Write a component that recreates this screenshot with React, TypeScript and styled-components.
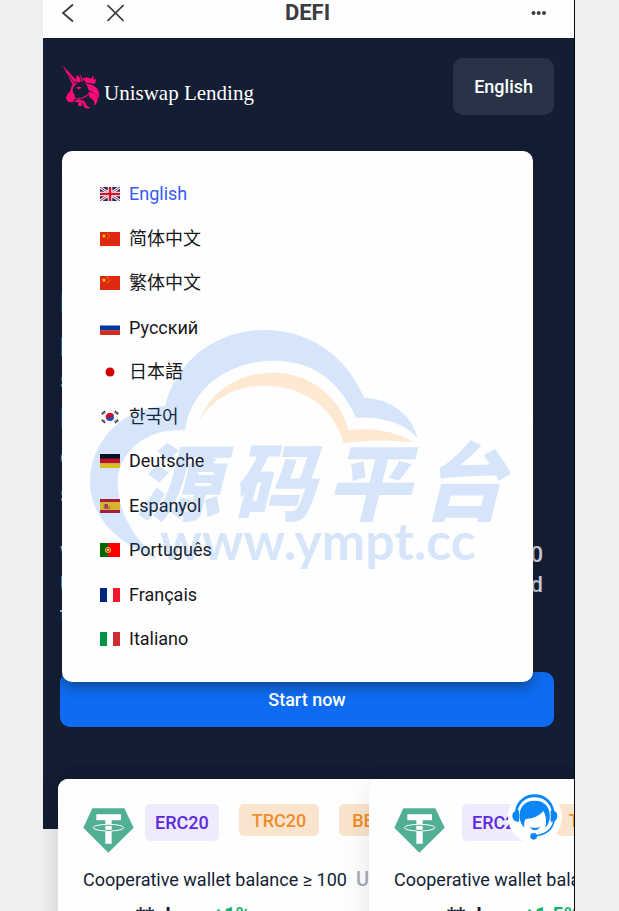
import React from "react";
import styled, { createGlobalStyle } from "styled-components";

const GlobalStyle = createGlobalStyle`
  * { box-sizing: border-box; }
  body {
    margin: 0;
    background: #efefef;
    font-family: Roboto, "Noto Sans CJK SC", "Noto Sans CJK KR", sans-serif;
    font-size: 18px;
    color: #131d33;
  }
  button { font: inherit; border: 0; padding: 0; background: none; cursor: pointer; }
  svg { display: block; flex: none; }
`;

const Frame = styled.div`
  position: relative;
  display: flex;
  flex-direction: column;
  height: 100vh;
  margin: 0 44px 0 43px;
  overflow: hidden;
  background: #f2f2f2;
  border-right: 1px solid #05070d;
`;

const TitleBar = styled.header`
  display: grid;
  grid-template-columns: 1fr auto 1fr;
  align-items: center;
  flex: none;
  height: 38px;
  padding: 0 20px 12px 18px;
  background: #fefefe;
  color: #3b3c3f;
`;

const NavButtons = styled.div`
  display: flex;
  gap: 33px;
`;

const IconButton = styled.button`
  display: flex;
  color: inherit;
`;

const MoreButton = styled(IconButton)`
  justify-self: end;
`;

const PageTitle = styled.h1`
  margin: 0;
  font-size: 22px;
  line-height: 26px;
  font-weight: 700;
`;

const Hero = styled.section`
  flex: none;
  padding: 20px 20px 102px 17px;
  background: #131d33;
`;

const BrandRow = styled.div`
  display: flex;
  align-items: center;
  justify-content: space-between;
  margin-bottom: 170px;
`;

const Brand = styled.a`
  display: flex;
  align-items: center;
  gap: 4px;
  padding-left: 2px;
  color: #fff;
  font-family: "Liberation Serif", serif;
  font-size: 21px;
  line-height: 24px;
  text-decoration: none;
`;

const BrandName = styled.span`
  padding-top: 12px;
`;

const LanguageButton = styled.button`
  height: 57px;
  padding: 0 21px;
  border-radius: 10px;
  background: #293347;
  color: #fff;
  font-weight: 500;
`;

const Headline = styled.h2`
  margin: 0 20px 27px 0;
  color: #c9ced8;
  font-size: 26px;
  line-height: 38px;
  font-weight: 500;
`;

const Intro = styled.p`
  margin: 0 11px 42px 0;
  color: #d3d7e0;
  font-size: 22px;
  line-height: 30px;
  font-weight: 500;
`;

const Line = styled.span<{ $fill?: boolean }>`
  display: block;
  white-space: nowrap;
  text-align-last: ${(p) => (p.$fill ? "justify" : "left")};
`;

const StartButton = styled.button`
  display: block;
  width: 100%;
  height: 55px;
  border-radius: 10px;
  background: #0d6cf2;
  color: #fff;
  font-weight: 500;
`;

const CardTrack = styled.section`
  display: flex;
  flex: none;
  width: max-content;
  margin: -50px 0 0 15px;
  border-radius: 10px 0 0 0;
  background: #fefefe;
  box-shadow: 0 10px 30px rgba(0, 0, 0, 0.08);
`;

const Card = styled.article`
  width: 311px;
  height: 240px;
  padding: 25px 0 0 25px;
  overflow: hidden;
  border-radius: 10px 0 0 0;
  background: #fefefe;
  box-shadow: 0 10px 30px rgba(0, 0, 0, 0.1);
`;

const ChainRow = styled.div<{ $gap: number }>`
  display: flex;
  align-items: flex-start;
  gap: ${(p) => p.$gap}px;
  width: max-content;
  height: 61px;
`;

const TetherSlot = styled.div`
  padding-top: 4px;
`;

const Chains = styled.div`
  display: flex;
  align-items: flex-start;
  gap: 20px;
`;

const Chain = styled.button<{ $active?: boolean }>`
  height: ${(p) => (p.$active ? 37 : 32)}px;
  padding: ${(p) => (p.$active ? "0 10px" : "0 13px")};
  border-radius: 5px;
  background: ${(p) => (p.$active ? "#efebfd" : "#f9e4cd")};
  color: ${(p) => (p.$active ? "#5b2be0" : "#f08c2c")};
  font-weight: 500;
`;

const BalanceRow = styled.div`
  display: flex;
  align-items: center;
  gap: 9px;
  height: 28px;
  white-space: nowrap;
`;

const Unit = styled.span`
  color: #a3abba;
  font-size: 20px;
  font-weight: 500;
`;

const TermRow = styled.div`
  display: flex;
  gap: 22px;
  padding: 10px 0 0 53px;
  font-size: 20px;
  line-height: 24px;
  font-weight: 700;
`;

const Rate = styled.span`
  color: #10b070;
`;

const Support = styled.button`
  position: absolute;
  right: 12px;
  top: 790px;
  display: flex;
  align-items: center;
  justify-content: center;
  width: 54px;
  height: 54px;
  border-radius: 50%;
  background: #fff;
`;

const Menu = styled.div`
  position: absolute;
  top: 151px;
  left: 19px;
  right: 41px;
  padding: 31px 38px;
  border-radius: 10px;
  background: #fefefe;
  box-shadow: 0 4px 14px rgba(20, 30, 40, 0.5);
`;

const LanguageList = styled.ul`
  display: flex;
  flex-direction: column;
  justify-content: space-between;
  min-height: 469px;
  margin: 0;
  padding: 0;
  list-style: none;
`;

const LanguageOption = styled.button<{ $selected: boolean }>`
  display: flex;
  align-items: center;
  gap: 9px;
  width: 100%;
  height: 24px;
  color: ${(p) => (p.$selected ? "#3659f5" : "#16171a")};
  line-height: 24px;
  text-align: left;
`;

const Watermark = styled.div`
  position: absolute;
  left: 18px;
  top: 159px;
  width: 450px;
  height: 280px;
  opacity: 0.17;
  color: rgb(23, 114, 236);
  pointer-events: none;
`;

const CloudLayer = styled.div`
  position: absolute;
  inset: 0;
`;

const WatermarkText = styled.div`
  padding: 124px 0 0 56px;
`;

const WatermarkName = styled.div`
  display: flex;
  gap: 11px;
  font-family: "Noto Sans CJK SC", sans-serif;
  font-size: 84px;
  line-height: 88px;
  font-style: italic;
  font-weight: 900;
`;

const WatermarkSite = styled.div`
  padding-left: 24px;
  font-family: Lato, sans-serif;
  font-size: 52px;
  line-height: 36px;
  font-weight: 700;
`;

const flags: Record<string, React.ReactNode> = {
  gb: (
    <>
      <path fill="#1c2a66" d="M0 0h20v14H0z" />
      <path stroke="#fff" strokeWidth="2.8" d="M0 0l20 14M20 0L0 14" />
      <path stroke="#cf142b" strokeWidth="1" d="M0 0l20 14M20 0L0 14" />
      <path stroke="#fff" strokeWidth="4.6" d="M10 0v14M0 7h20" />
      <path stroke="#cf142b" strokeWidth="2.6" d="M10 0v14M0 7h20" />
    </>
  ),
  cn: (
    <>
      <path fill="#de2910" d="M0 0h20v14H0z" />
      <path fill="#ffde00" d="M4 1.8l.6 1.6h1.700L5 4.400l.5 1.700L4 5.100 2.500 6.100 3 4.400 1.700 3.400h1.700z" />
      <path fill="#f5a800" d="M7 1h1v1H7zM8.600 2.600h1v1h-1zM8.600 4.600h1v1h-1zM7 6h1v1H7z" />
    </>
  ),
  ru: (
    <>
      <path fill="#fff" d="M0 0h20v5H0z" />
      <path fill="#0039a6" d="M0 4.500h20v5H0z" />
      <path fill="#d52b1e" d="M0 9.300h20V14H0z" />
    </>
  ),
  jp: <circle cx="10" cy="7" r="4.500" fill="#d30000" />,
  kr: (
    <>
      <circle cx="10" cy="7" r="4" fill="#2f4fa5" />
      <path fill="#e00020" d="M6.600 9.200A4 4 0 0 1 13.400 4.800Q12.500 7.500 10 7T6.600 9.200z" />
      <path stroke="#111" strokeWidth="2.400" strokeDasharray="1 .5" d="M2 4l3-2.500M15 1.500l3 2.500M2 10l3 2.500M15 12.500l3-2.500" />
    </>
  ),
  de: (
    <>
      <path fill="#000" d="M0 0h20v5H0z" />
      <path fill="#dd0000" d="M0 4.500h20v5H0z" />
      <path fill="#ffce00" d="M0 9.300h20V14H0z" />
    </>
  ),
  es: (
    <>
      <path fill="#c60b1e" d="M0 0h20v14H0z" />
      <path fill="#ffc400" d="M0 3h20v8H0z" />
      <path fill="#c0304a" d="M5 5h3v4H5z" />
      <path stroke="#8a4a50" strokeWidth=".8" d="M4.300 5v4.500h5V7" fill="none" />
    </>
  ),
  pt: (
    <>
      <path fill="#f00" d="M0 0h20v14H0z" />
      <path fill="#060" d="M0 0h8v14H0z" />
      <circle cx="8" cy="7" r="3" fill="#e6bd28" />
      <path fill="#e02020" d="M6.300 5h3.400v3L8 9.400 6.300 8z" />
      <path fill="#fff" d="M7.200 5.800h1.600v2H7.200z" />
    </>
  ),
  fr: (
    <>
      <path fill="#fff" d="M0 0h20v14H0z" />
      <path fill="#00267f" d="M0 0h7v14H0z" />
      <path fill="#f31830" d="M13 0h7v14h-7z" />
    </>
  ),
  it: (
    <>
      <path fill="#fff" d="M0 0h20v14H0z" />
      <path fill="#009246" d="M0 0h7v14H0z" />
      <path fill="#ce2b37" d="M13 0h7v14h-7z" />
    </>
  ),
};

const languages = [
  ["gb", "English"],
  ["cn", "简体中文"],
  ["cn", "繁体中文"],
  ["ru", "Русский"],
  ["jp", "日本語"],
  ["kr", "한국어"],
  ["de", "Deutsche"],
  ["es", "Espanyol"],
  ["pt", "Português"],
  ["fr", "Français"],
  ["it", "Italiano"],
];

const plans = [
  { balance: "100", rate: "+1%", gap: 11 },
  { balance: "5000", rate: "+1.5%", gap: 17 },
];

function UnicornLogo() {
  return (
    <svg width="38" height="44" viewBox="0 0 114 132" fill="#ff0a78" aria-hidden="true">
      <path d="M1 1L43 45Q38 50 36 56L30 57Q19 29 1 1z" />
      <path d="M20 28L36 55" stroke="#131d33" strokeWidth="2" />
      <path d="M43 53Q40 38 46 29Q57 38 55 52Q49 49 43 53z" />
      <path d="M52 28Q64 37 61 52L57 50Q58 38 52 28z" />
      <path d="M46 54Q31 52 28 66Q27 78 18 86Q10 95 14 105Q20 114 33 111Q35 104 42 98Q35 95 38 87Q31 84 32 76Q34 63 46 54z" />
      <path d="M43 67Q51 63 58 67Q55 74 48 72Q44 70 43 67z" />
      <path d="M40 100Q54 101 65 95Q74 91 80 84Q78 94 66 99Q52 104 41 103z" />
      <path d="M61 40Q76 35 87 41Q91 38 93 31Q97 38 95 44L100 41Q104 50 96 57Q82 52 74 55Q66 48 61 40z" />
      <path d="M67 55Q79 58 88 59Q104 64 110 78Q113 90 109 103Q104 88 93 82Q77 77 77 66Q74 59 67 55z" />
      <path d="M79 80Q103 83 107 99Q108 114 96 122Q100 108 90 102Q78 96 80 88z" />
      <path d="M35 111Q46 101 56 105Q71 108 71 115Q73 126 86 127Q79 134 69 128Q63 124 63 118Q63 112 58 112Q64 121 55 124Q46 124 48 116Q51 111 56 116Q48 109 35 111z" />
    </svg>
  );
}

function TetherLogo() {
  return (
    <svg width="51" height="45" viewBox="0 0 153 135" aria-hidden="true">
      <path fill="#50af95" d="M28 1h96l28 58-76 75L1 59z" />
      <path fill="#fff" d="M40 19h74v18H86v70H67V37H40z" />
      <ellipse cx="76.500" cy="59" rx="46" ry="10" fill="none" stroke="#fff" strokeWidth="3" />
      <path stroke="#50af95" strokeWidth="3" d="M67 67h19M67 52h19" />
    </svg>
  );
}

function SupportIcon() {
  return (
    <svg width="46" height="46" viewBox="0 0 138 138" fill="#0a86f7" aria-hidden="true">
      <path d="M9 52C14 19 39 1 68 1s54 18 59 51l-7 2C115 28 96 10 68 10S21 28 16 54z" />
      <path d="M16 49h5v34h-6Q1 80 1 66t15-17zM121 49h-5v34h6q14-3 14-17t-15-17z" />
      <path d="M23 76C19 42 36 20 68 20s49 22 45 56q-3 16-13 26l2-16q1-22-8-35Q78 72 41 75q-6 8-4 26Q26 90 23 76z" />
      <path d="M54 98q14 7 30 0-5 10-15 10T54 98z" />
      <circle cx="65" cy="127" r="10" />
      <path fill="none" stroke="#0a86f7" strokeWidth="5" d="M126 80q-7 40-58 46" />
    </svg>
  );
}

function CloudMark() {
  return (
    <svg width="450" height="280" viewBox="0 0 1350 840">
      <path
        fill="rgb(23,114,236)"
        d="M232 745C110 700 30 620 30 515C30 400 120 295 255 288C290 150 410 60 555 60C690 60 800 140 852 263C930 265 998 315 1012 384C970 335 900 320 828 323C780 215 700 152 582 152C440 152 330 240 315 361C200 350 113 430 113 515C113 600 155 680 232 745z"
      />
      <path
        fill="rgb(250,137,0)"
        d="M357 338C385 250 470 188 580 188C690 188 780 260 806 361C880 350 950 365 1002 398C930 388 860 390 790 400C765 295 670 227 555 227C465 227 390 270 357 338z"
      />
    </svg>
  );
}

export default function App() {
  return (
    <>
      <GlobalStyle />
      <Frame>
        <TitleBar>
          <NavButtons>
            <IconButton aria-label="Back">
              <svg width="13" height="20" viewBox="0 0 13 20" fill="none" stroke="currentColor" strokeWidth="1.800">
                <path d="M12 1.500L2 10l10 8.500" />
              </svg>
            </IconButton>
            <IconButton aria-label="Close">
              <svg width="17" height="20" viewBox="0 0 17 20" fill="none" stroke="currentColor" strokeWidth="1.700">
                <path d="M.5 2l16 16M16.500 2l-16 16" />
              </svg>
            </IconButton>
          </NavButtons>
          <PageTitle>DEFI</PageTitle>
          <MoreButton aria-label="More">
            <svg width="24" height="20" viewBox="0 0 24 20" fill="currentColor">
              <circle cx="3.500" cy="10" r="2" />
              <circle cx="8.700" cy="10" r="2" />
              <circle cx="14" cy="10" r="2" />
            </svg>
          </MoreButton>
        </TitleBar>

        <Hero>
          <BrandRow>
            <Brand href="#">
              <UnicornLogo />
              <BrandName>Uniswap Lending</BrandName>
            </Brand>
            <LanguageButton aria-haspopup="listbox" aria-expanded="true">
              English
            </LanguageButton>
          </BrandRow>
          <Headline>
            <Line>Returns from liquidity</Line>
            <Line>pools, paid daily to your</Line>
            <Line>supported wallet with</Line>
            <Line $fill>liquidity mining and steady rewards</Line>
            <Line>on every coin you hold</Line>
            <Line>securely</Line>
          </Headline>
          <Intro>
            <Line $fill>With a wallet balance of more than 100</Line>
            <Line $fill>USDT you can join the pool and</Line>
            <Line>take part at any time.</Line>
          </Intro>
          <StartButton>Start now</StartButton>
        </Hero>

        <CardTrack>
          {plans.map((plan) => (
            <Card key={plan.rate}>
              <ChainRow $gap={plan.gap}>
                <TetherSlot>
                  <TetherLogo />
                </TetherSlot>
                <Chains>
                  <Chain $active>ERC20</Chain>
                  <Chain>TRC20</Chain>
                  <Chain>BEP20</Chain>
                </Chains>
              </ChainRow>
              <BalanceRow>
                <span>Cooperative wallet balance ≥ {plan.balance}</span>
                <Unit>USDT</Unit>
              </BalanceRow>
              <TermRow>
                <span>** day</span>
                <Rate>{plan.rate}</Rate>
              </TermRow>
            </Card>
          ))}
        </CardTrack>

        <Support aria-label="Customer support">
          <SupportIcon />
        </Support>

        <Menu>
          <LanguageList aria-label="Language">
            {languages.map(([flag, name]) => (
              <li key={name}>
                <LanguageOption $selected={name === "English"}>
                  <svg width="20" height="14" viewBox="0 0 20 14" aria-hidden="true">
                    {flags[flag]}
                  </svg>
                  {name}
                </LanguageOption>
              </li>
            ))}
          </LanguageList>
          <Watermark aria-hidden="true">
            <CloudLayer>
              <CloudMark />
            </CloudLayer>
            <WatermarkText>
              <WatermarkName>
                <span>源</span>
                <span>码</span>
                <span>平</span>
                <span>台</span>
              </WatermarkName>
              <WatermarkSite>www.ympt.cc</WatermarkSite>
            </WatermarkText>
          </Watermark>
        </Menu>
      </Frame>
    </>
  );
}
